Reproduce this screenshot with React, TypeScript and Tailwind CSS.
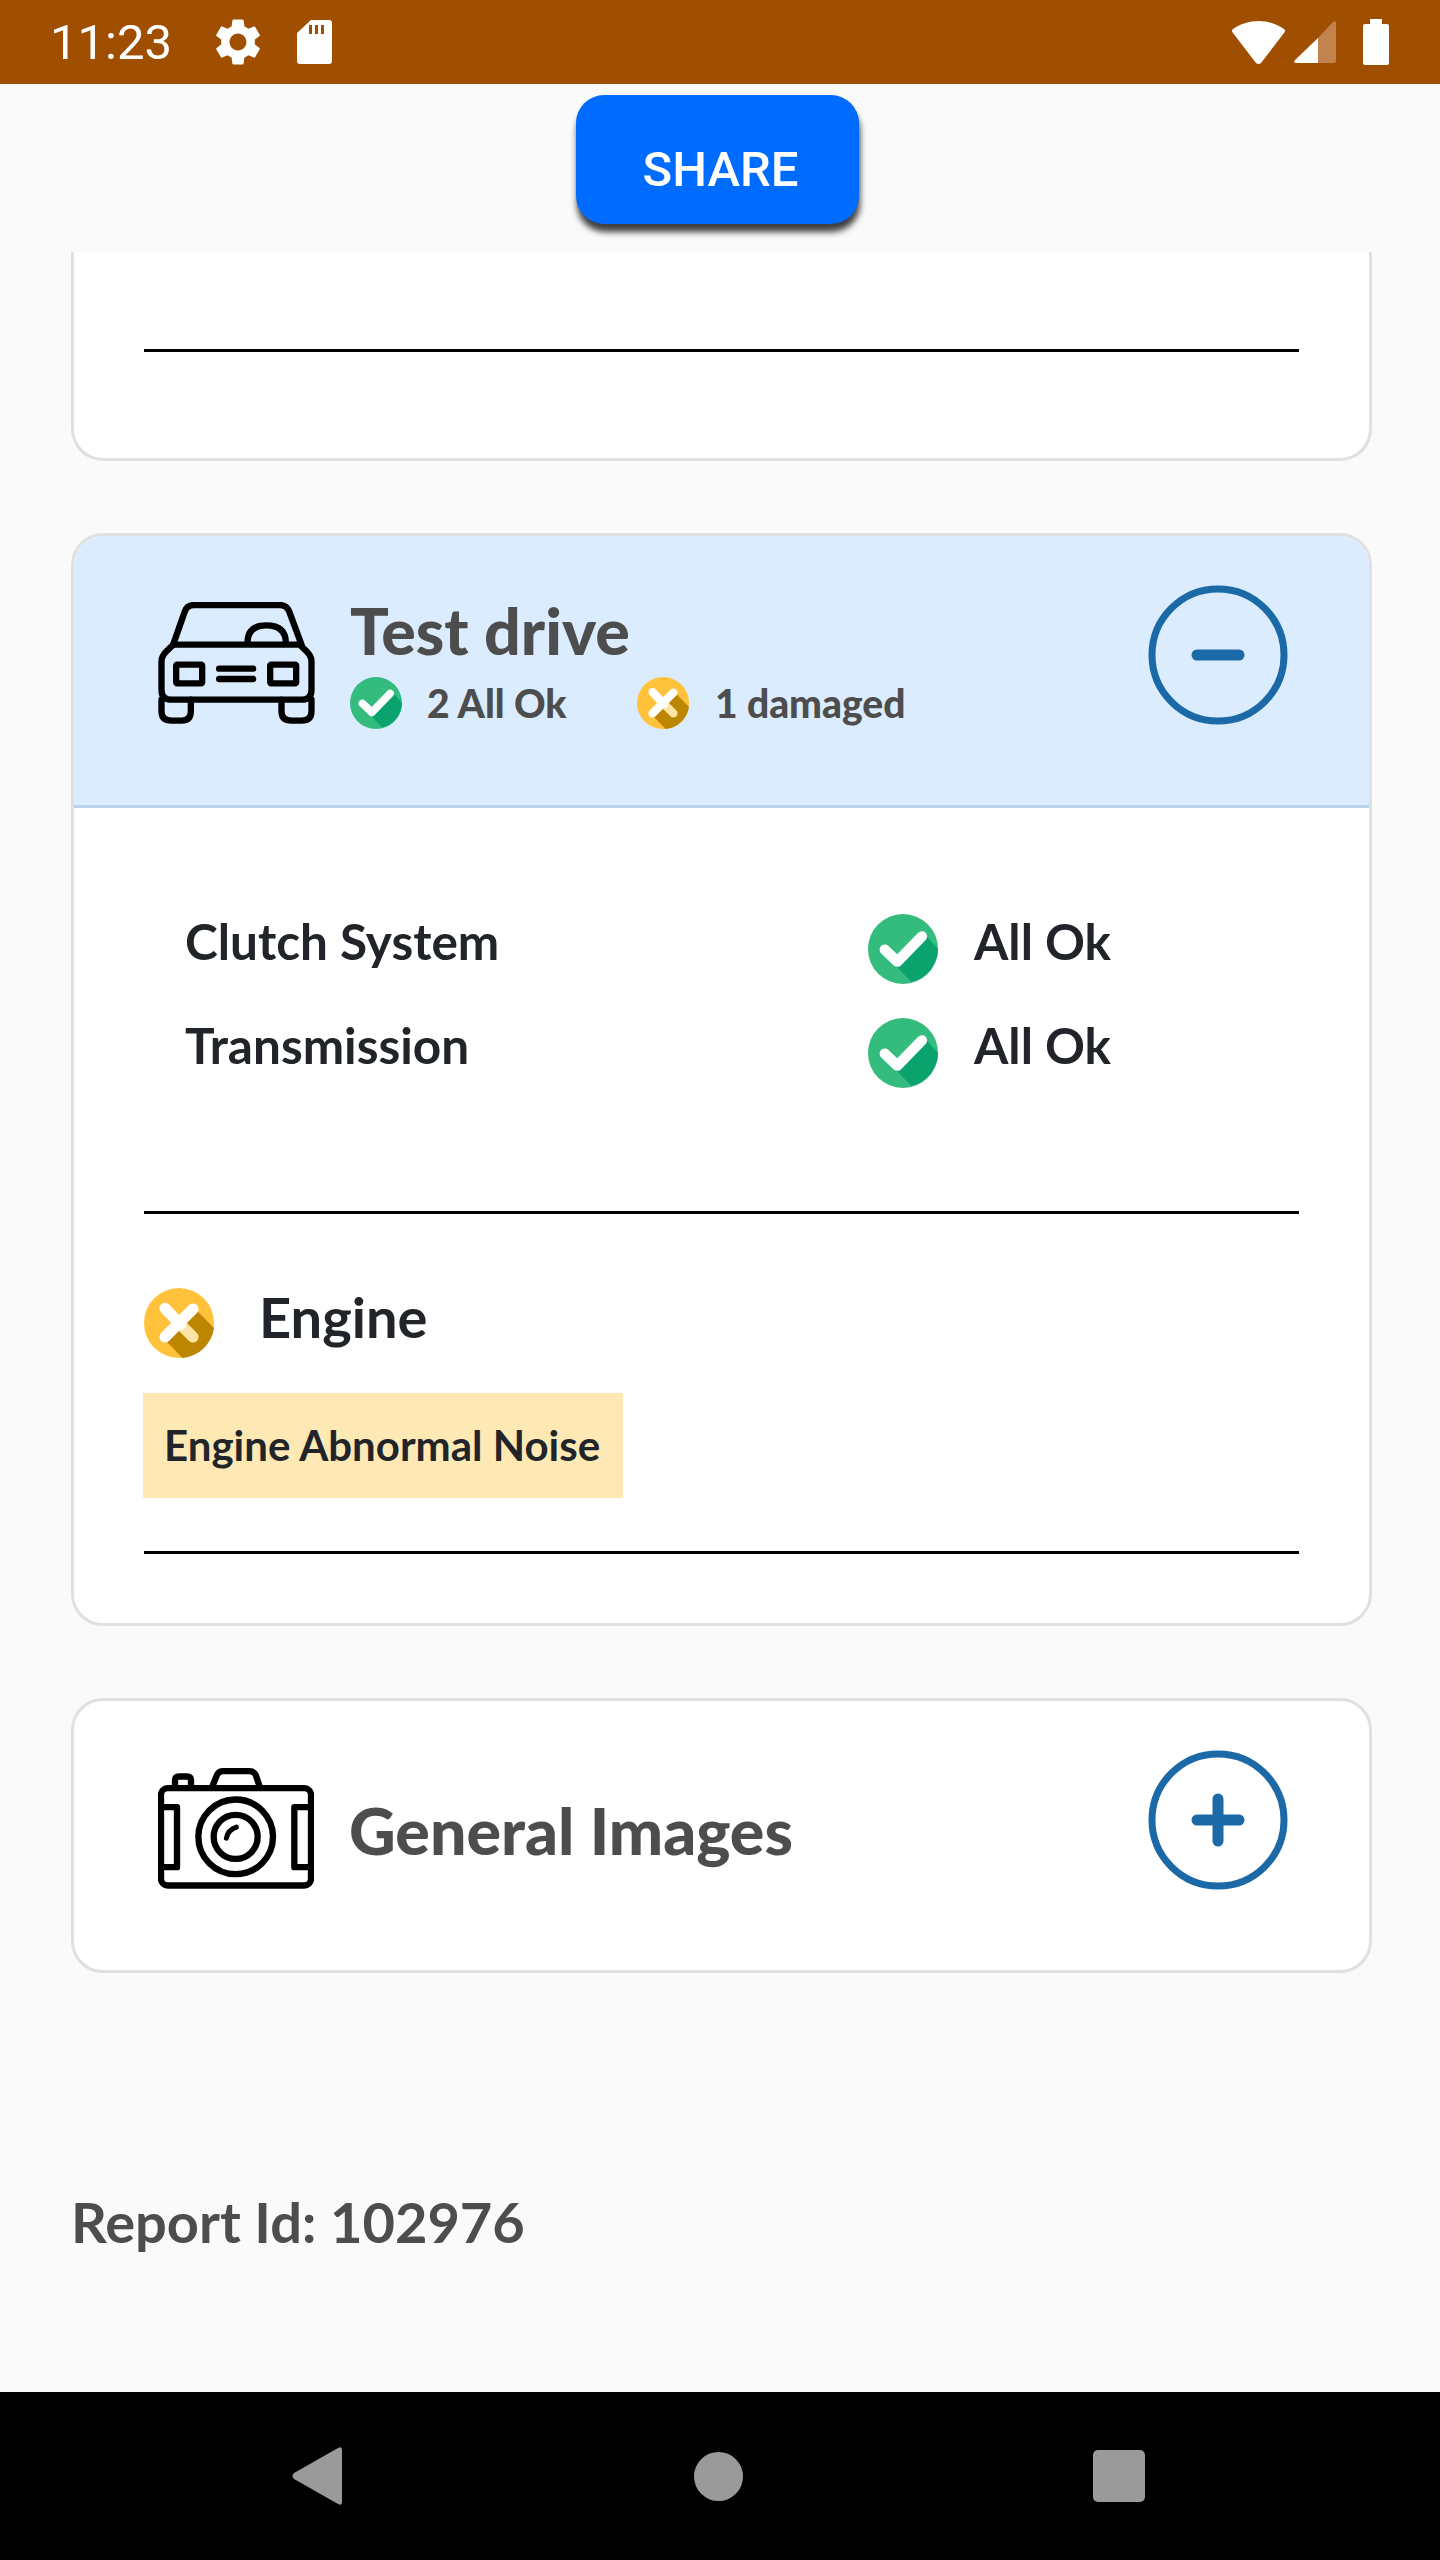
import React from "react"

const CheckIcon = ({ size }: { size: string }) => (
    <svg viewBox="0 0 100 100" className={`${size} shrink-0`}>
        <circle cx="50" cy="50" r="50" fill="#34bb7e" />
        <path d="M36 70 L62 97 A50 50 0 0 0 100 50 L83 31 Z" fill="#0aa36e" />
        <path d="M24 51 L42 68 L77 32" fill="none" stroke="#fff" strokeWidth="15" strokeLinecap="round" strokeLinejoin="round" />
    </svg>
)

const WarnIcon = ({ size }: { size: string }) => (
    <svg viewBox="0 0 100 100" className={`${size} shrink-0`}>
        <circle cx="50" cy="50" r="50" fill="#ffc23a" />
        <path d="M24 68 L55 100 A50 50 0 0 0 100 57 L76 33 Z" fill="#bd8600" />
        <path d="M50 50 L70 70" stroke="#fee5a6" strokeWidth="16" strokeLinecap="round" />
        <path d="M30 29 L52 52 M70 30 L30 70" fill="none" stroke="#fff" strokeWidth="16" strokeLinecap="round" />
    </svg>
)

const RoundToggle = ({ plus }: { plus?: boolean }) => (
    <svg viewBox="0 0 140 140" className="w-[140px] h-[140px] shrink-0">
        <circle cx="70" cy="70" r="66" fill="none" stroke="#1c69a8" strokeWidth="7" />
        <path d="M49 70 H91" stroke="#1c69a8" strokeWidth="11" strokeLinecap="round" />
        {plus && <path d="M70 49 V91" stroke="#1c69a8" strokeWidth="11" strokeLinecap="round" />}
    </svg>
)

const CarIcon = () => (
    <svg viewBox="85 97 470 366" className="w-[157px] h-[122px] shrink-0" fill="none" stroke="#000" strokeWidth="19" strokeLinecap="round" strokeLinejoin="round">
        <path d="M130 225 L165 125 Q172 106 192 106 H450 Q470 106 478 125 L515 225" />
        <path d="M130 225 H510 L530 245 Q545 260 545 275 V360 Q545 390 515 390 H125 Q95 390 95 360 V275 Q95 260 110 245 Z" />
        <path d="M95 390 V425 Q95 453 125 453 H155 Q183 453 183 425 V390 M455 390 V425 Q455 453 485 453 H515 Q545 453 545 425 V390" />
        <rect x="139" y="285" width="78" height="56" rx="3" />
        <rect x="421" y="285" width="78" height="56" rx="3" />
        <path d="M268 297 H370 M268 328 H370" />
        <path d="M353 220 Q353 167 410 167 Q468 167 468 220" />
    </svg>
)

const CameraIcon = () => (
    <svg viewBox="85 85 468 362" className="w-[156px] h-[121px] shrink-0" fill="none" stroke="#000" strokeWidth="19" strokeLinecap="round" strokeLinejoin="round">
        <rect x="94" y="145" width="450" height="292" rx="20" />
        <path d="M248 140 L262 105 Q268 94 280 94 H360 Q372 94 378 105 L390 140" />
        <path d="M136 140 V122 Q136 110 148 110 H172 Q184 110 184 122 V140" />
        <path d="M98 202 H142 V382 H98 M540 202 H494 V382 H540" />
        <circle cx="318" cy="291" r="112" />
        <circle cx="318" cy="291" r="66" />
        <path d="M290 295 Q295 270 320 262" strokeWidth="15" />
    </svg>
)

const StatusBar = () => (
    <div className="h-[84px] bg-[#a04e00] flex items-center pl-[50px] pr-[51px] text-white shrink-0">
        <span className="font-[Roboto] text-[49px] leading-none w-[122px]">11:23</span>
        <svg viewBox="2.6 2.2 18.8 19.6" className="w-[44px] h-[46px] ml-[44px]" fill="#fff">
            <path d="M19.14 12.94c.04-.3.06-.61.06-.94 0-.32-.02-.64-.07-.94l2.03-1.58c.18-.14.23-.41.12-.61l-1.92-3.32c-.12-.22-.37-.29-.59-.22l-2.39.96c-.5-.38-1.03-.7-1.62-.94l-.36-2.54c-.04-.24-.24-.41-.48-.41h-3.84c-.24 0-.43.17-.47.41l-.36 2.54c-.59.24-1.13.57-1.62.94l-2.39-.96c-.22-.08-.47 0-.59.22L2.74 8.87c-.12.21-.08.47.12.61l2.03 1.58c-.05.3-.09.63-.09.94s.02.64.07.94l-2.03 1.58c-.18.14-.23.41-.12.61l1.92 3.32c.12.22.37.29.59.22l2.39-.96c.5.38 1.03.7 1.62.94l.36 2.54c.05.24.24.41.48.41h3.84c.24 0 .44-.17.47-.41l.36-2.54c.59-.24 1.13-.56 1.62-.94l2.39.96c.22.08.47 0 .59-.22l1.92-3.32c.12-.22.07-.47-.12-.61l-2.01-1.58zM12 15.6c-1.98 0-3.6-1.62-3.6-3.6s1.62-3.6 3.6-3.6 3.6 1.62 3.6 3.6-1.62 3.6-3.6 3.6z" />
        </svg>
        <svg viewBox="0 0 35 44" className="w-[35px] h-[44px] ml-[37px]">
            <path fillRule="evenodd" fill="#fff" d="M14 0 H32 Q35 0 35 3 V41 Q35 44 32 44 H3 Q0 44 0 41 V13 Z M12 5 V14 H15 V5 Z M18 5 V14 H21 V5 Z M24 5 V14 H27 V5 Z" />
        </svg>
        <div className="ml-auto flex items-center">
            <svg viewBox="0 0 53 43" className="w-[53px] h-[43px]">
                <path fill="#fff" d="M26.5 0 C36 0 45 3 52 8 Q54 10 52 12 L29 42 Q26.5 44 24 42 L1 12 Q-1 10 1 8 C8 3 17 0 26.5 0 Z" />
            </svg>
            <svg viewBox="0 0 42 42" className="w-[42px] h-[42px] ml-[9px]">
                <path fill="#fff" d="M24 17 V42 H2 Q-1 42 1 39 Z" />
                <path fill="#c1844f" d="M24 17 L39 1 Q42 -1 42 2 V40 Q42 42 40 42 H24 Z" />
            </svg>
            <svg viewBox="0 0 26 46" className="w-[26px] h-[46px] ml-[27px]">
                <path fill="#fff" d="M7 0 H19 V5 H24 Q26 5 26 7 V44 Q26 46 24 46 H2 Q0 46 0 44 V7 Q0 5 2 5 H7 Z" />
            </svg>
        </div>
    </div>
)

const Divider = () => <div className="h-[3px] bg-black mx-[70px]"></div>

const App = () => {
    const rows = ['Clutch System', 'Transmission']

    return (
        <div className="w-[1440px] h-[2560px] bg-[#fafafa] flex flex-col font-[Lato] overflow-hidden">
            <StatusBar />

            <div className="h-[168px] shrink-0 flex justify-center pt-[11px] pr-[5px]">
                <button className="w-[283px] h-[129px] pt-[20px] pl-[6px] rounded-[28px] bg-[#006cff] text-white font-[Roboto] font-medium text-[49px] shadow-[1px_8px_6px_rgba(0,0,0,0.75)]">SHARE</button>
            </div>

            <div className="flex-1 pl-[71px] pr-[68px]">
                <div className="h-[209px] bg-white border-x-[3px] border-b-[3px] border-[#e0e0e0] rounded-b-[32px] pt-[97px]">
                    <Divider />
                </div>

                <div className="mt-[72px] h-[1093px] bg-white border-[3px] border-[#e0e0e0] rounded-[32px] overflow-hidden">
                    <div className="h-[272px] bg-[#daecfe] border-b-[3px] border-[#b9d5ec] flex pl-[84px] pr-[81px] pt-[49px]">
                        <div className="pt-[17px]"><CarIcon /></div>
                        <div className="ml-[35px] pt-[9px]">
                            <h4 className="text-[64.5px] leading-[72px] font-black text-[#4d4d4d]">Test drive</h4>
                            <div className="flex items-center mt-[11px] text-[39px] leading-[52px] font-black text-[#4d4d4d]">
                                <CheckIcon size="w-[52px] h-[52px]" />
                                <span className="ml-[25px] w-[210px]">2 All Ok</span>
                                <WarnIcon size="w-[52px] h-[52px]" />
                                <span className="ml-[26px]">1 damaged</span>
                            </div>
                        </div>
                        <div className="ml-auto"><RoundToggle /></div>
                    </div>

                    <div className="pt-[106px] pl-[111px] flex flex-col gap-[34px]">
                        {rows.map((row) => (
                            <div key={row} className="flex h-[70px] text-[49.5px] leading-[54px] font-bold text-[#212529]">
                                <span className="w-[683px]">{row}</span>
                                <CheckIcon size="w-[70px] h-[70px]" />
                                <span className="ml-[36px]">All Ok</span>
                            </div>
                        ))}
                    </div>

                    <div className="mt-[123px]"><Divider /></div>

                    <div className="flex items-center mt-[71px] pl-[70px] text-[56px] leading-[64px] font-bold text-[#212529]">
                        <WarnIcon size="w-[70px] h-[70px]" />
                        <span className="ml-[45px] mb-[12px]">Engine</span>
                    </div>

                    <div className="mt-[32px] ml-[69px] w-[480px] h-[105px] bg-[#fee9b5] flex items-center pl-[21px] text-[42px] font-bold text-[#212529]">Engine Abnormal Noise</div>

                    <div className="mt-[53px]"><Divider /></div>
                </div>

                <div className="mt-[72px] h-[275px] bg-white border-[3px] border-[#e0e0e0] rounded-[32px] flex pl-[84px] pr-[81px] pt-[49px]">
                    <div className="pt-[18px]"><CameraIcon /></div>
                    <h4 className="ml-[35px] pt-[44px] text-[64.5px] leading-[72px] font-black text-[#4d4d4d]">General Images</h4>
                    <div className="ml-auto"><RoundToggle plus /></div>
                </div>

                <p className="mt-[214px] text-[56px] leading-[70px] font-bold text-[#4d4d4d]">Report Id: 102976</p>
            </div>

            <div className="h-[168px] bg-black shrink-0 flex items-center pl-[292px] pr-[295px] justify-between">
                <svg viewBox="0 0 50 58" className="w-[50px] h-[58px]">
                    <path fill="#9a9a9a" d="M46 1 Q50 -1 50 3 V55 Q50 59 46 57 L2 32 Q-1 29 2 26 Z" />
                </svg>
                <div className="w-[49px] h-[49px] rounded-full bg-[#9a9a9a] ml-[2px]"></div>
                <div className="w-[52px] h-[52px] rounded-[5px] bg-[#9a9a9a]"></div>
            </div>
        </div>
    )
}

export default App
